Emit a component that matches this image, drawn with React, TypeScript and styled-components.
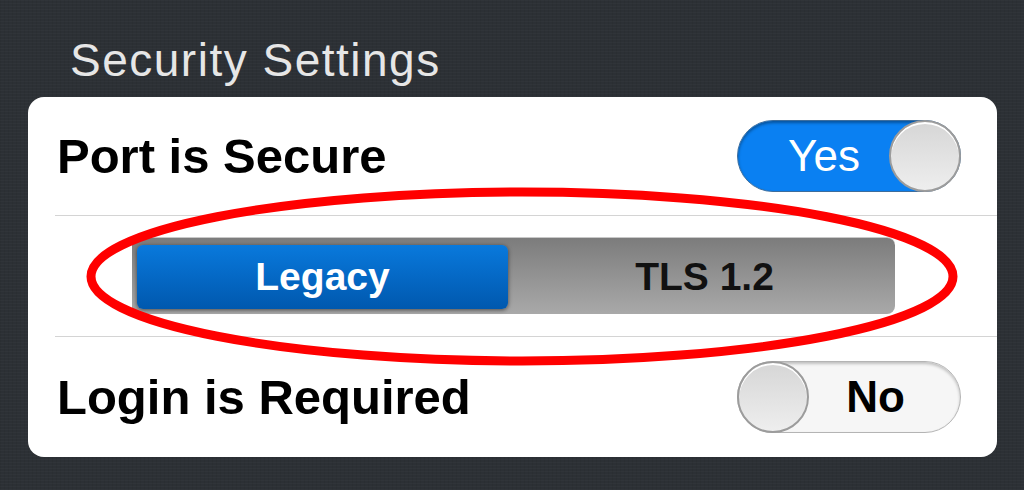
import React from 'react';
import styled, { createGlobalStyle } from 'styled-components';

const GlobalStyle = createGlobalStyle`
  html, body {
    margin: 0;
    padding: 0;
  }
  body {
    width: 1024px;
    height: 490px;
    overflow: hidden;
    background-color: #2c3035;
    background-image:
      repeating-linear-gradient(0deg, rgba(255,255,255,0.018) 0 1px, transparent 1px 3px),
      repeating-linear-gradient(90deg, rgba(0,0,0,0.05) 0 1px, transparent 1px 4px);
    font-family: "Liberation Sans", Arial, sans-serif;
  }
`;

const Page = styled.div`
  position: relative;
  width: 1024px;
  height: 490px;
  padding: 0 27px 0 28px;
  box-sizing: border-box;
`;

const Title = styled.h1`
  margin: 0;
  height: 97px;
  box-sizing: border-box;
  padding: 34px 0 0 42px;
  font-size: 46px;
  line-height: 52px;
  font-weight: normal;
  letter-spacing: 1.5px;
  color: #e6e6e6;
`;

const Card = styled.div`
  background: #ffffff;
  border-radius: 16px;
  height: 360px;
  display: flex;
  flex-direction: column;
  overflow: hidden;
`;

const Row = styled.div<{ $h: number }>`
  height: ${(p) => p.$h}px;
  display: flex;
  align-items: center;
  justify-content: space-between;
  padding: 0 36px 0 29px;
  box-sizing: border-box;
`;

const CenterRow = styled.div`
  height: 120px;
  display: flex;
  align-items: center;
  justify-content: center;
  padding-left: 2px;
`;

const Divider = styled.div`
  height: 1px;
  margin-left: 27px;
  background: #d4d4d4;
`;

const Label = styled.span`
  font-size: 49px;
  font-weight: bold;
  color: #000;
`;

const Track = styled.div<{ $on: boolean }>`
  width: 224px;
  height: 72px;
  border-radius: 36px;
  box-sizing: border-box;
  display: flex;
  flex-direction: ${(p) => (p.$on ? 'row' : 'row-reverse')};
  align-items: center;
  background: ${(p) => (p.$on ? '#0a80f2' : '#f6f6f6')};
  border: 1px solid ${(p) => (p.$on ? '#3d6d9c' : '#b4b4b4')};
  box-shadow: inset 0 2px 3px ${(p) => (p.$on ? 'rgba(0,0,0,0.35)' : 'rgba(0,0,0,0.22)')};
`;

const TrackText = styled.span<{ $on: boolean }>`
  flex: 1;
  text-align: center;
  font-size: 44px;
  font-weight: ${(p) => (p.$on ? 'normal' : 'bold')};
  color: ${(p) => (p.$on ? '#ffffff' : '#000000')};
  padding: ${(p) => (p.$on ? '0 0 0 20px' : '0 17px 0 0')};
  line-height: 1;
`;

const Knob = styled.div`
  width: 72px;
  height: 72px;
  margin: -1px;
  border-radius: 50%;
  box-sizing: border-box;
  border: 2px solid #9c9c9c;
  background: linear-gradient(180deg, #d6d6d6 0%, #eeeeee 100%);
  box-shadow: inset 0 2px 0 #ffffff;
  flex-shrink: 0;
`;

const Segmented = styled.div`
  width: 763px;
  height: 77px;
  margin-top: -1px;
  box-sizing: border-box;
  padding: 7px 0 5px 5px;
  border-radius: 4px 8px 8px 4px;
  background: linear-gradient(180deg, #7c7c7c 0%, #a9a9a9 100%);
  border-top: 1px solid #c8c8c8;
  display: flex;
`;

const Segment = styled.div<{ $active: boolean }>`
  flex: ${(p) => (p.$active ? '0 0 371px' : '1')};
  border-radius: 6px;
  display: flex;
  align-items: center;
  justify-content: center;
  font-size: 39px;
  font-weight: bold;
  color: ${(p) => (p.$active ? '#ffffff' : '#111111')};
  background: ${(p) => (p.$active ? 'linear-gradient(180deg, #0979dc 0%, #0058ae 100%)' : 'transparent')};
  box-shadow: ${(p) => (p.$active ? '0 1px 4px rgba(0,0,0,0.55)' : 'none')};
  padding-left: ${(p) => (p.$active ? '0' : '6px')};
`;

const Overlay = styled.svg`
  position: absolute;
  left: 0;
  top: 0;
  pointer-events: none;
`;

const Toggle: React.FC<{ on: boolean; label: string }> = ({ on, label }) => (
  <Track $on={on}>
    <TrackText $on={on}>{label}</TrackText>
    <Knob />
  </Track>
);

export default function App() {
  return (
    <Page>
      <GlobalStyle />
      <Title>Security Settings</Title>
      <Card>
        <Row $h={118}>
          <Label>Port is Secure</Label>
          <Toggle on label="Yes" />
        </Row>
        <Divider />
        <CenterRow>
          <Segmented>
            <Segment $active>Legacy</Segment>
            <Segment $active={false}>TLS 1.2</Segment>
          </Segmented>
        </CenterRow>
        <Divider />
        <Row $h={120}>
          <Label>Login is Required</Label>
          <Toggle on={false} label="No" />
        </Row>
      </Card>
      <Overlay width="1024" height="490" viewBox="0 0 1024 490">
        <ellipse cx="522" cy="276.5" rx="431" ry="84.5" fill="none" stroke="#ff0000" strokeWidth="9" />
      </Overlay>
    </Page>
  );
}
